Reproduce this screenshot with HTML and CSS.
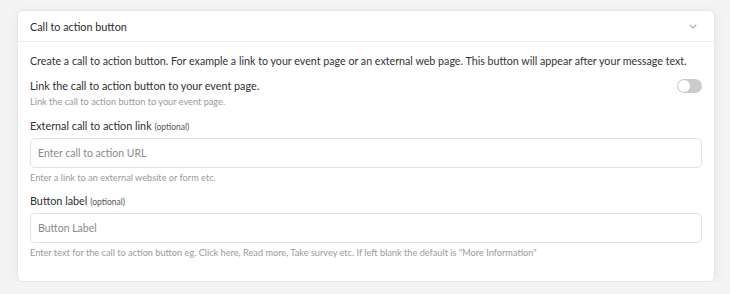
FILE: index.html
```html
<!DOCTYPE html>
<html>
<head>
<meta charset="utf-8">
<link rel="stylesheet" href="styles.css">
</head>
<body>
<section class="card">
  <header class="card-head">
    <span class="card-title">Call to action button</span>
    <svg class="chevron" width="8" height="5" viewBox="0 0 8 5"><path d="M1 1l3 3 3-3" fill="none" stroke="#b5b5b5" stroke-width="1.1" stroke-linecap="round" stroke-linejoin="round"/></svg>
  </header>
  <div class="card-body">
    <p class="desc">Create a call to action button. For example a link to your event page or an external web page. This button will appear after your message text.</p>
    <div class="toggle-row">
      <span class="label">Link the call to action button to your event page.</span>
      <span class="toggle"><span class="knob"></span></span>
    </div>
    <p class="hint">Link the call to action button to your event page.</p>

    <div class="field">
      <label class="label">External call to action link <small class="opt">(optional)</small></label>
      <div class="input">Enter call to action URL</div>
      <p class="hint">Enter a link to an external website or form etc.</p>
    </div>

    <div class="field">
      <label class="label">Button label <small class="opt">(optional)</small></label>
      <div class="input">Button Label</div>
      <p class="hint">Enter text for the call to action button eg. Click here, Read more, Take survey etc. If left blank the default is "More Information"</p>
    </div>
  </div>
</section>
</body>
</html>
```
FILE: styles.css
```css
* { box-sizing: border-box; }
html, body { margin: 0; }
body {
  background: #f4f4f4;
  font-family: "Lato", "Noto Sans", sans-serif;
  color: #2f2f2f;
  padding: 10px 15px 0 17px;
}
.card {
  background: #fff;
  border: 1px solid #e6e6e6;
  border-radius: 6px;
  box-shadow: 0 2px 14px rgba(0,0,0,0.06);
  width: 698px;
}
.card-head {
  display: flex;
  align-items: center;
  justify-content: space-between;
  height: 31px;
  padding: 0 17px 0 12px;
  border-bottom: 1px solid #ececec;
}
.card-title { font-size: 10.8px; color: #2b2b2b; }
.chevron { display: block; }
.card-body { padding: 10px 12px 21px 12px; }
.desc { margin: 0; font-size: 10.7px; line-height: 18px; color: #333; }
.toggle-row {
  display: flex;
  align-items: center;
  justify-content: space-between;
  margin-top: 7px;
}
.label { display: block; font-size: 10.8px; line-height: 18px; color: #2f2f2f; }
.opt { font-size: 8.5px; color: #555; }
.toggle {
  width: 25px; height: 14px;
  border-radius: 7px;
  background: #cbcbcb;
  position: relative;
}
.knob {
  position: absolute; left: 1px; top: 1px;
  width: 12px; height: 12px; border-radius: 50%;
  background: #fff;
}
.hint { margin: 0; font-size: 9.2px; line-height: 14px; color: #9a9a9a; }
.field { margin-top: 8px; }
.field + .field { margin-top: 7px; }
.input {
  margin-top: 2px;
  height: 30px;
  border: 1px solid #e3e3e3;
  border-radius: 5px;
  padding: 0 7px;
  display: flex; align-items: center;
  font-size: 10.5px;
  color: #8a8a8a;
  margin-bottom: 3px;
}
```
